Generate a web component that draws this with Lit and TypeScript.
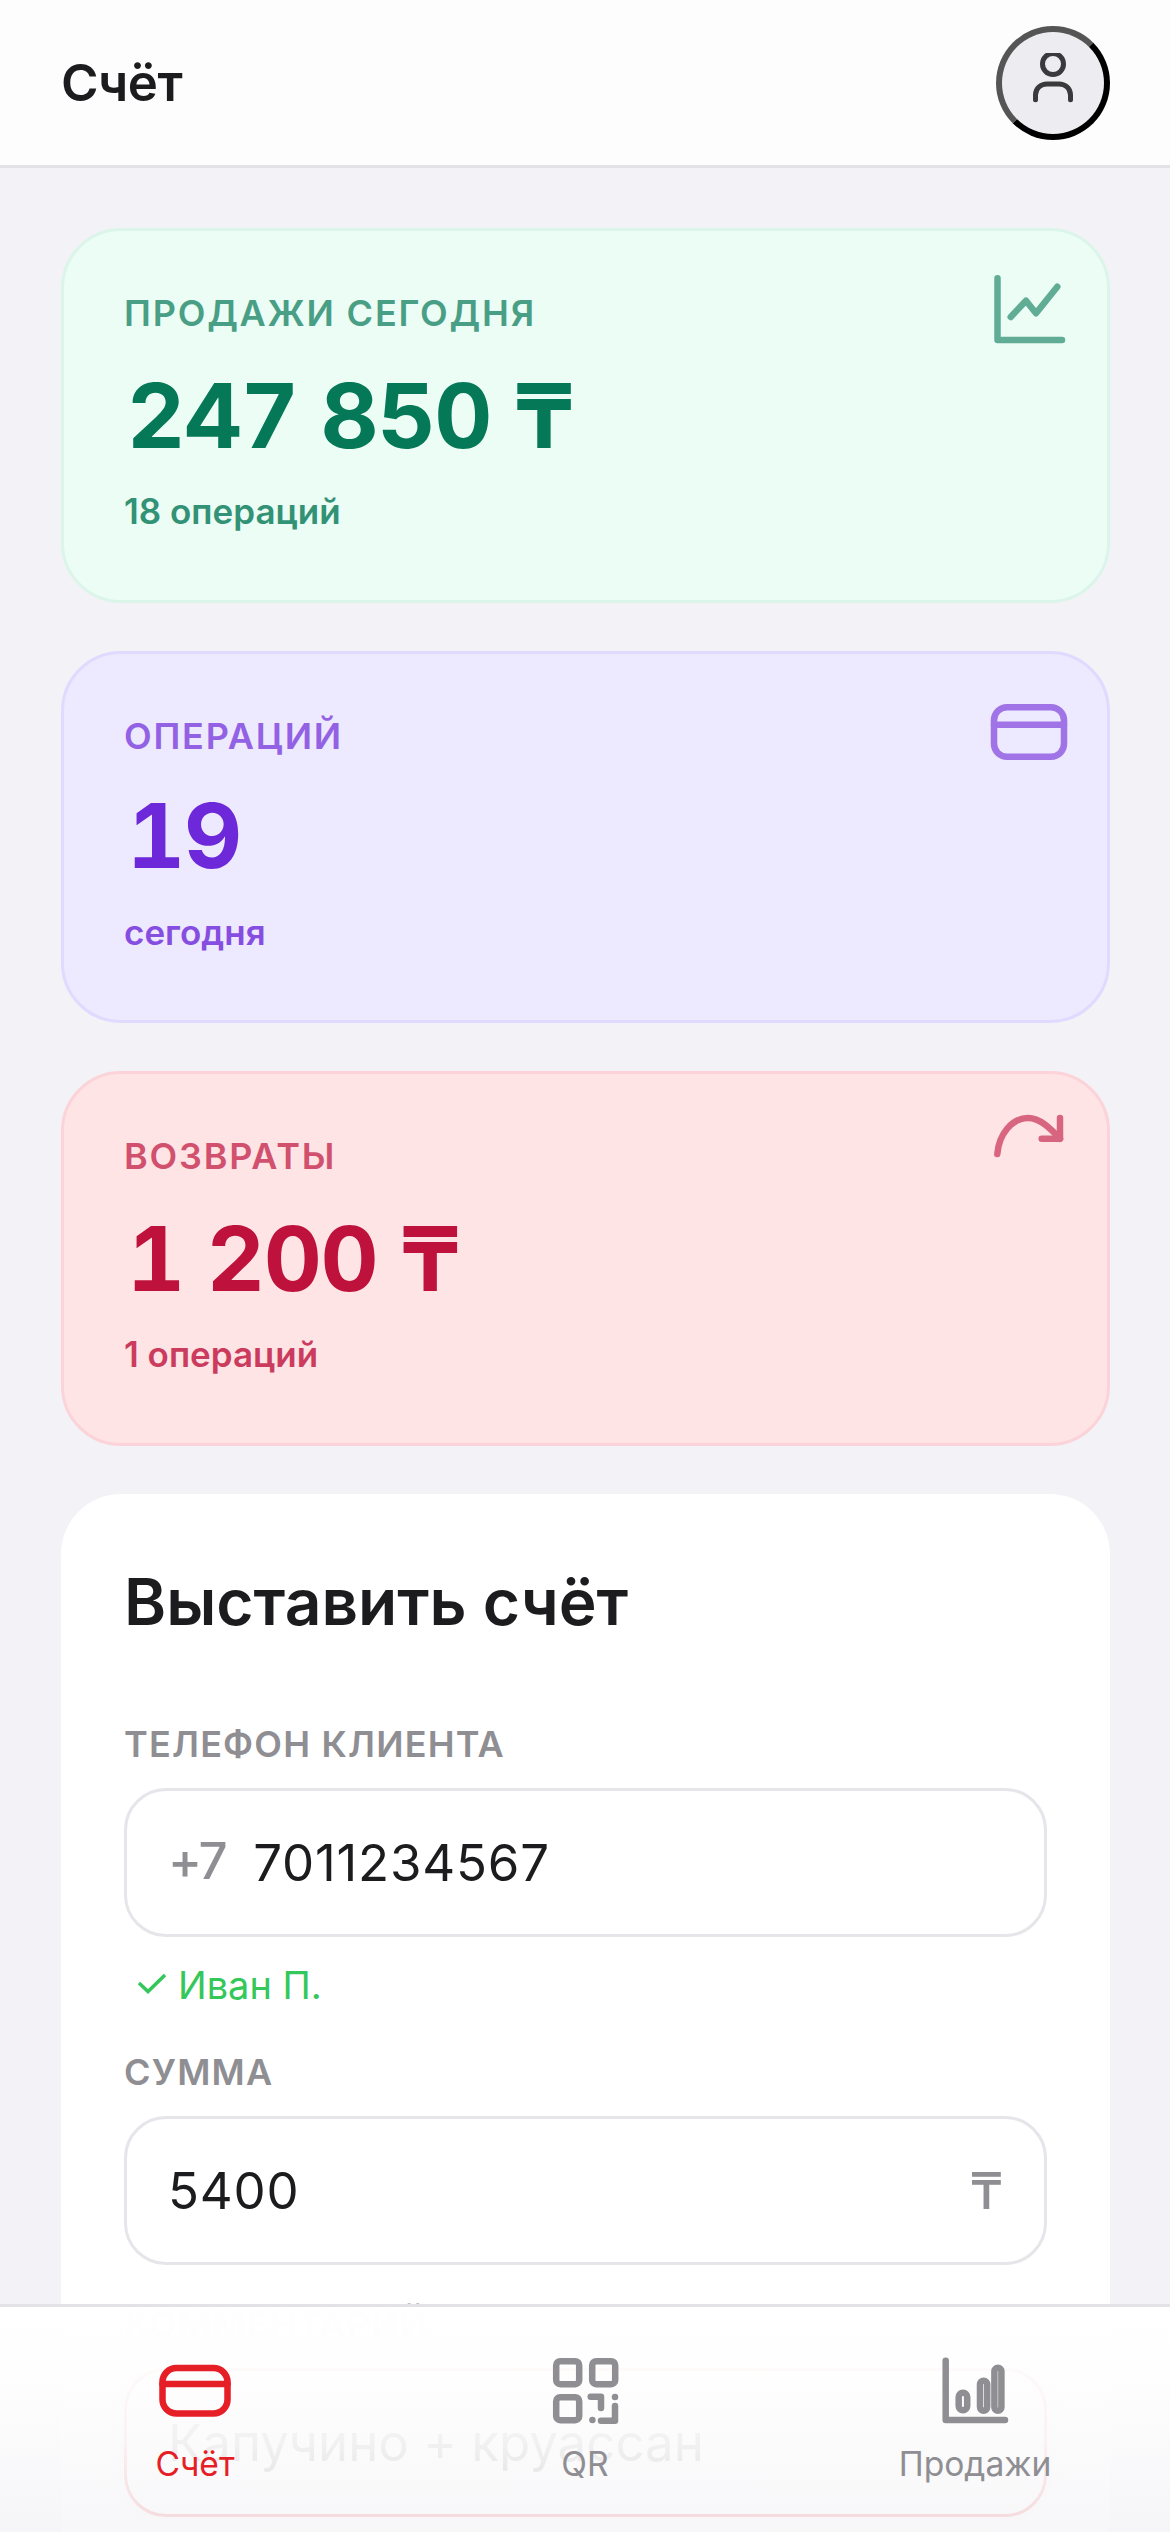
import { LitElement, html, css, svg } from 'lit';
import { customElement } from 'lit/decorators.js';

const stats = [
  {
    tone: 'green',
    label: 'ПРОДАЖИ СЕГОДНЯ',
    value: '247 850 ₸',
    sub: '18 операций',
    icon: svg`<path d="M7.5 9.3V71H72"/><path d="M20.7 48L36 31.7L46 44.3L67.3 17.7"/>`
  },
  {
    tone: 'violet',
    label: 'ОПЕРАЦИЙ',
    value: '19',
    sub: 'сегодня',
    icon: svg`<rect x="4" y="15.2" width="70" height="49.6" rx="13"/><path d="M4 32.7H74"/>`
  },
  {
    tone: 'rose',
    label: 'ВОЗВРАТЫ',
    value: '1 200 ₸',
    sub: '1 операций',
    icon: svg`<path d="M7.3 42C9 22 22 6 38 6C50 6 60 16 70 26.7"/><path d="M70 6V26.7H51.7"/>`
  }
];

const tabs = [
  {
    label: 'Счёт',
    active: true,
    icon: svg`<rect x="7.5" y="18" width="65" height="45.5" rx="14"/><path d="M7.5 34H72.5"/>`
  },
  {
    label: 'QR',
    active: false,
    icon: svg`<rect x="11.2" y="11.2" width="23" height="23" rx="4"/><rect x="47.2" y="11.2" width="23" height="23" rx="4"/><rect x="11.2" y="47.2" width="23" height="23" rx="4"/><path d="M45.7 46.7H56V58"/><path d="M70 56V70.7H56"/><path d="M70 47V47.1"/><path d="M47.4 70V70.1"/>`
  },
  {
    label: 'Продажи',
    active: false,
    icon: svg`<path d="M10.7 10.7V70H70"/><rect x="23.7" y="42.7" width="8.5" height="17.5" rx="4.2"/><rect x="45" y="30.7" width="7.2" height="30" rx="3.6"/><rect x="59.4" y="17.7" width="7" height="43" rx="3.5"/>`
  }
];

@customElement('app-root')
export class AppRoot extends LitElement {
  static styles = css`
    :host {
      display: block;
      position: relative;
      height: 100vh;
      overflow: hidden;
      background: #f2f2f7;
      font-family: Inter, 'Liberation Sans', sans-serif;
      color: #1c1c1e;
    }

    header {
      display: flex;
      align-items: center;
      justify-content: space-between;
      height: 165px;
      padding: 0 60px 0 61px;
      background: #fdfdfe;
      border-bottom: 3px solid #e3e3e7;
    }

    header h1 {
      margin: 0;
      font-size: 51px;
      font-weight: 600;
      letter-spacing: -0.5px;
    }

    .avatar {
      display: flex;
      align-items: center;
      justify-content: center;
      box-sizing: border-box;
      width: 114px;
      height: 114px;
      padding: 0;
      background: #edecf1;
      border: 6px solid;
      border-color: #555 #000 #000 #555;
      border-radius: 50%;
    }

    .avatar svg {
      width: 60px;
      height: 60px;
      fill: none;
      stroke: #3a3a3c;
      stroke-width: 5;
      stroke-linecap: round;
    }

    main {
      display: flex;
      flex-direction: column;
      gap: 48px;
      padding: 60px 60px 0 61px;
    }

    .stat {
      position: relative;
      box-sizing: border-box;
      height: 375px;
      padding: 60px;
      border: 3px solid;
      border-radius: 60px;
    }

    .stat.green { background: #ecfdf5; border-color: #dcf5ea; color: #047857; }
    .stat.violet { background: #ede9fe; border-color: #e0daff; color: #6d28d9; height: 372px; }
    .stat.rose { background: #ffe4e6; border-color: #fbd3d8; color: #be123c; }

    .stat-label {
      font-size: 36px;
      line-height: 44px;
      font-weight: 600;
      letter-spacing: 1.8px;
      opacity: 0.7;
    }

    .stat-value {
      margin: 18px 0 6px;
      padding-left: 3px;
      font-size: 90px;
      line-height: 125px;
      font-weight: 700;
      font-variant-numeric: tabular-nums;
      letter-spacing: -1.3px;
      white-space: pre;
    }

    .stat.violet .stat-value {
      margin: 15px 0 7px;
    }

    .stat-sub {
      font-size: 35px;
      line-height: 54px;
      font-weight: 600;
      opacity: 0.8;
    }

    .stat-icon {
      position: absolute;
      top: 38px;
      right: 37px;
      width: 80px;
      height: 80px;
      overflow: visible;
      fill: none;
      stroke: currentColor;
      stroke-width: 6.5;
      stroke-linecap: round;
      stroke-linejoin: round;
      opacity: 0.6;
    }

    .form {
      padding: 60px 63px;
      background: #fff;
      border-radius: 60px;
    }

    .form h2 {
      margin: 0 0 72px;
      font-size: 64px;
      line-height: 96px;
      font-weight: 600;
    }

    .field-label {
      margin-bottom: 22px;
      font-size: 36px;
      line-height: 44px;
      font-weight: 600;
      letter-spacing: 1.2px;
      color: #8e8e93;
    }

    .field {
      display: flex;
      align-items: center;
      gap: 28px;
      box-sizing: border-box;
      height: 149px;
      padding: 0 41px;
      border: 3px solid #e5e5ea;
      border-radius: 42px;
      background: #fff;
      font-size: 51px;
    }

    .field.focused {
      border-color: #e31e24;
      box-shadow: 0 0 24px rgba(227, 30, 36, 0.15);
    }

    .field input {
      flex: 1;
      min-width: 0;
      padding: 0;
      border: 0;
      outline: 0;
      background: none;
      font: inherit;
      letter-spacing: 0.8px;
      color: #1c1c1e;
    }

    .field.focused input {
      letter-spacing: 0;
    }

    .field span {
      color: #8e8e93;
      font-weight: 500;
    }

    .field .prefix {
      margin-top: -4px;
      letter-spacing: -2.4px;
    }

    .hint {
      display: flex;
      align-items: center;
      gap: 8px;
      height: 58px;
      margin: 19px 0 36px;
      padding-left: 12px;
      font-size: 38px;
      color: #34c759;
    }

    .hint svg {
      width: 34px;
      height: 34px;
      fill: none;
      stroke: currentColor;
      stroke-width: 3.5;
    }

    .gap {
      height: 37px;
    }

    nav {
      position: absolute;
      left: 0;
      right: 0;
      bottom: 0;
      display: grid;
      grid-template-columns: repeat(3, 1fr);
      box-sizing: border-box;
      height: 228px;
      padding-top: 43px;
      background: linear-gradient(
        rgba(255, 255, 255, 0.995) 0%,
        rgba(254, 254, 254, 0.98) 30%,
        rgba(251, 251, 252, 0.955) 60%,
        rgba(246, 246, 248, 0.86) 100%
      );
      border-top: 3px solid #e3e3e7;
    }

    .tab {
      display: flex;
      flex-direction: column;
      align-items: center;
      font-size: 33.6px;
      line-height: 40px;
      color: #8e8e93;
    }

    .tab.active {
      color: #e61e26;
    }

    .tab svg {
      width: 80px;
      height: 80px;
      margin-bottom: 14px;
      fill: none;
      stroke: currentColor;
      stroke-width: 6.5;
      stroke-linecap: round;
      stroke-linejoin: round;
    }
  `;

  render() {
    return html`
      <header>
        <h1>Счёт</h1>
        <button class="avatar">
          <svg viewBox="0 0 60 60">
            <circle cx="30" cy="11" r="10.5"></circle>
            <path d="M12.5 46.7V42C12.5 35 18 31 24 31H36C42 31 47.5 35 47.5 42V46.7"></path>
          </svg>
        </button>
      </header>
      <main>
        ${stats.map(
          (s) => html`
            <section class="stat ${s.tone}">
              <div class="stat-label">${s.label}</div>
              <div class="stat-value">${s.value}</div>
              <div class="stat-sub">${s.sub}</div>
              <svg class="stat-icon" viewBox="0 0 80 80">${s.icon}</svg>
            </section>
          `
        )}
        <section class="form">
          <h2>Выставить счёт</h2>
          <div class="field-label">ТЕЛЕФОН КЛИЕНТА</div>
          <div class="field">
            <span class="prefix">+7</span>
            <input value="7011234567" />
          </div>
          <div class="hint">
            <svg viewBox="0 0 34 34"><path d="M3 15L12 23.5L29 7"></path></svg>
            Иван П.
          </div>
          <div class="field-label">СУММА</div>
          <div class="field">
            <input value="5400" />
            <span>₸</span>
          </div>
          <div class="gap"></div>
          <div class="field-label">КОММЕНТАРИЙ</div>
          <div class="field focused">
            <input value="Капучино + круассан" />
          </div>
        </section>
      </main>
      <nav>
        ${tabs.map(
          (t) => html`
            <div class="tab ${t.active ? 'active' : ''}">
              <svg viewBox="0 0 80 80">${t.icon}</svg>
              ${t.label}
            </div>
          `
        )}
      </nav>
    `;
  }
}
